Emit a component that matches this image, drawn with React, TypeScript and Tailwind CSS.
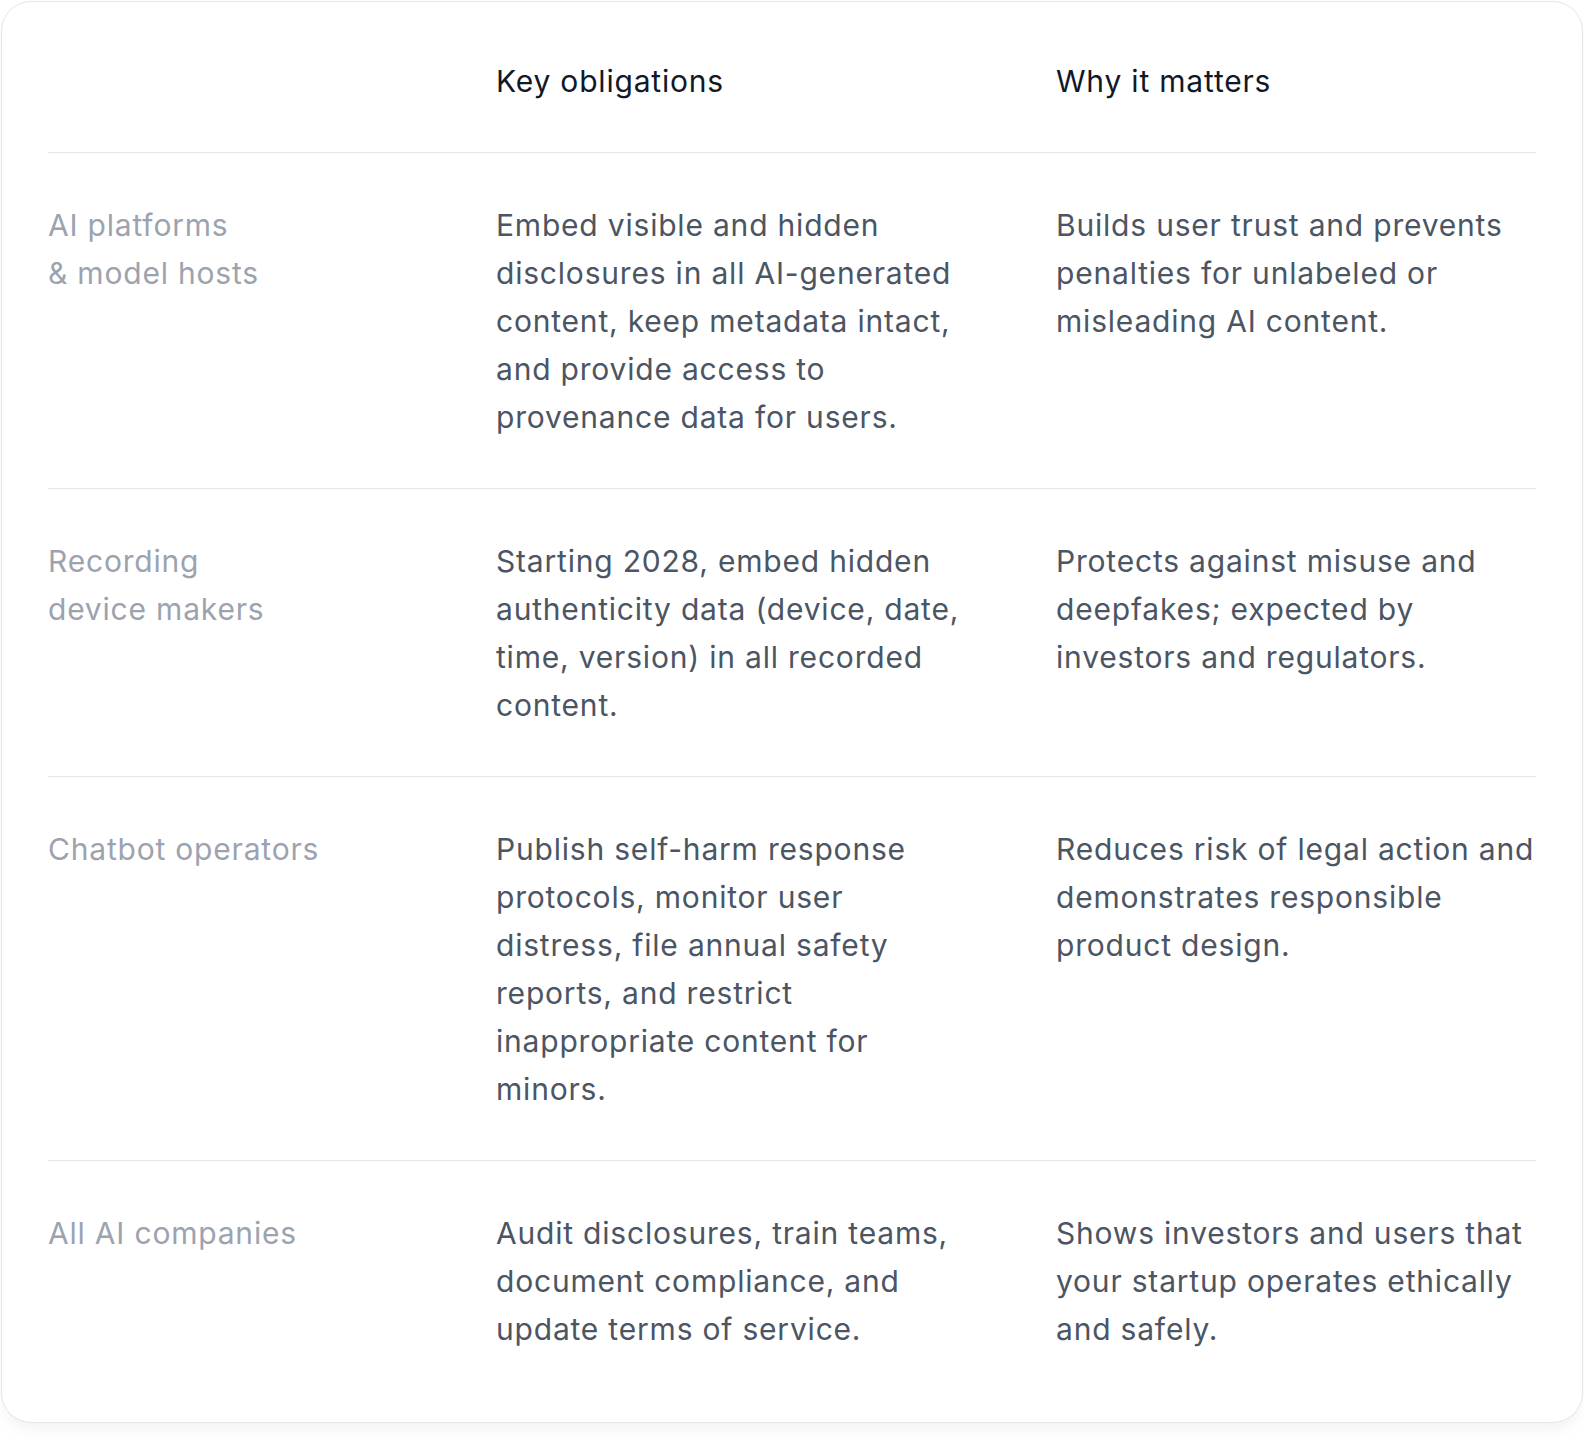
const ROWS = [
  {
    who: ["AI platforms", "& model hosts"],
    obligations:
      "Embed visible and hidden disclosures in all AI-generated content, keep metadata intact, and provide access to provenance data for users.",
    why: "Builds user trust and prevents penalties for unlabeled or misleading AI content.",
  },
  {
    who: ["Recording", "device makers"],
    obligations:
      "Starting 2028, embed hidden authenticity data (device, date, time, version) in all recorded content.",
    why: "Protects against misuse and deepfakes; expected by investors and regulators.",
  },
  {
    who: ["Chatbot operators"],
    obligations:
      "Publish self-harm response protocols, monitor user distress, file annual safety reports, and restrict inappropriate content for minors.",
    why: "Reduces risk of legal action and demonstrates responsible product design.",
  },
  {
    who: ["All AI companies"],
    obligations:
      "Audit disclosures, train teams, document compliance, and update terms of service.",
    why: "Shows investors and users that your startup operates ethically and safely.",
  },
];

export default function App() {
  return (
    <div
      className="min-h-[1450px] bg-white p-px tracking-[0.8px]"
      style={{ fontFamily: "Inter, 'Noto Sans', sans-serif" }}
    >
      <div className="rounded-[30px] border border-[#e2e5ea] bg-white px-[46px] pt-[55px] pb-[22px] shadow-[0_10px_18px_-6px_rgba(17,24,39,0.07)]">
        {/* Header */}
        <div className="grid grid-cols-[400px_512px_1fr] gap-x-12 pb-[47px] text-[30px] leading-[48px] text-[#111827]">
          <div />
          <div>Key obligations</div>
          <div>Why it matters</div>
        </div>

        {ROWS.map((r) => (
          <div
            key={r.who.join(" ")}
            className="grid grid-cols-[400px_512px_1fr] gap-x-12 border-t border-[#e2e5ea] pt-12 pb-[47px] text-[30px] leading-[48px]"
          >
            <div className="text-[#9ca3af]">
              {r.who.map((w) => (
                <div key={w}>{w}</div>
              ))}
            </div>
            <div className="max-w-[475px] text-[#4b5563]">{r.obligations}</div>
            <div className="text-[#4b5563]">{r.why}</div>
          </div>
        ))}
      </div>
    </div>
  );
}
